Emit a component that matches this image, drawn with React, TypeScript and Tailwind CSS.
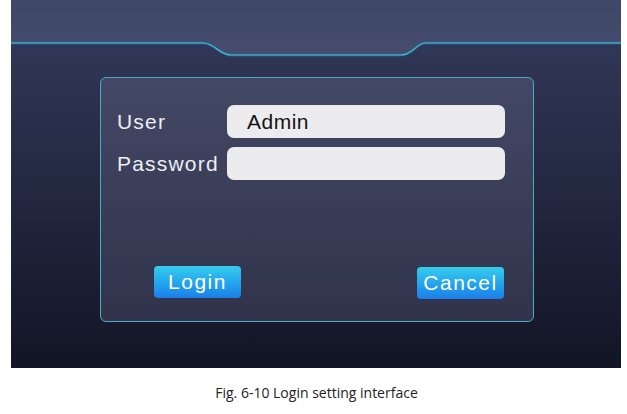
const labelFont = { fontFamily: '"Liberation Sans", Arial, sans-serif' };

function HeaderBar() {
  return (
    <svg width="610" height="60" viewBox="0 0 610 60" className="block">
      <defs>
        <linearGradient id="hdr" x1="0" y1="0" x2="0" y2="1">
          <stop offset="0" stopColor="#3f4768" />
          <stop offset="1" stopColor="#454c6d" />
        </linearGradient>
      </defs>
      <path
        d="M0 0 H610 V43 H415 C405 43 402 55 390 55 H220 C208 55 204 43 192 43 H0 Z"
        fill="url(#hdr)"
      />
      <path
        d="M0 43 H192 C204 43 208 55 220 55 H390 C402 55 405 43 415 43 H610"
        fill="none"
        stroke="#2a6f98"
        strokeWidth="3"
        opacity="0.6"
      />
      <path
        d="M0 43 H192 C204 43 208 55 220 55 H390 C402 55 405 43 415 43 H610"
        fill="none"
        stroke="#4cc0e0"
        strokeWidth="1.2"
      />
    </svg>
  );
}

function Field({ label, value }: { label: string; value?: string }) {
  return (
    <div className="flex items-center">
      <span className="w-[110px] text-[21px] tracking-[1.2px] text-[#eceef2]" style={labelFont}>
        {label}
      </span>
      <div className="flex h-[33px] w-[278px] items-center rounded-[7px] bg-[#ececef] pl-[20px] text-[21px] tracking-[0.5px] text-[#141414]">
        {value}
      </div>
    </div>
  );
}

function Btn({ children }: { children: string }) {
  return (
    <button className="flex h-[32px] w-[87px] items-center justify-center rounded-[4px] bg-gradient-to-b from-[#37cdee] to-[#1d7ee8] text-[21px] tracking-[1.5px] text-white">
      {children}
    </button>
  );
}

export default function App() {
  return (
    <div className="h-[414px] w-[627px] bg-white" style={labelFont}>
      <div className="ml-[11px] h-[368px] w-[610px] bg-gradient-to-b from-[#343b5c] via-[#242942] to-[#121525]">
        <HeaderBar />
        <div className="ml-[89px] mt-[17px] h-[245px] w-[434px] rounded-[6px] border border-[#4fa9c4] bg-gradient-to-b from-[#434866] to-[#30334a] px-[16px] pt-[27px]">
          <div className="flex flex-col gap-[9px]">
            <Field label="User" value="Admin" />
            <Field label="Password" />
          </div>
          <div className="mt-[86px] flex justify-between pl-[37px] pr-[13px]">
            <Btn>Login</Btn>
            <div className="mt-[1px]">
              <Btn>Cancel</Btn>
            </div>
          </div>
        </div>
      </div>
      <div className="flex justify-center pl-[6px] pt-[14px]">
        <span className="text-[14px] text-[#222]" style={{ fontFamily: '"Open Sans", sans-serif' }}>
          Fig. 6-10 Login setting interface
        </span>
      </div>
    </div>
  );
}
